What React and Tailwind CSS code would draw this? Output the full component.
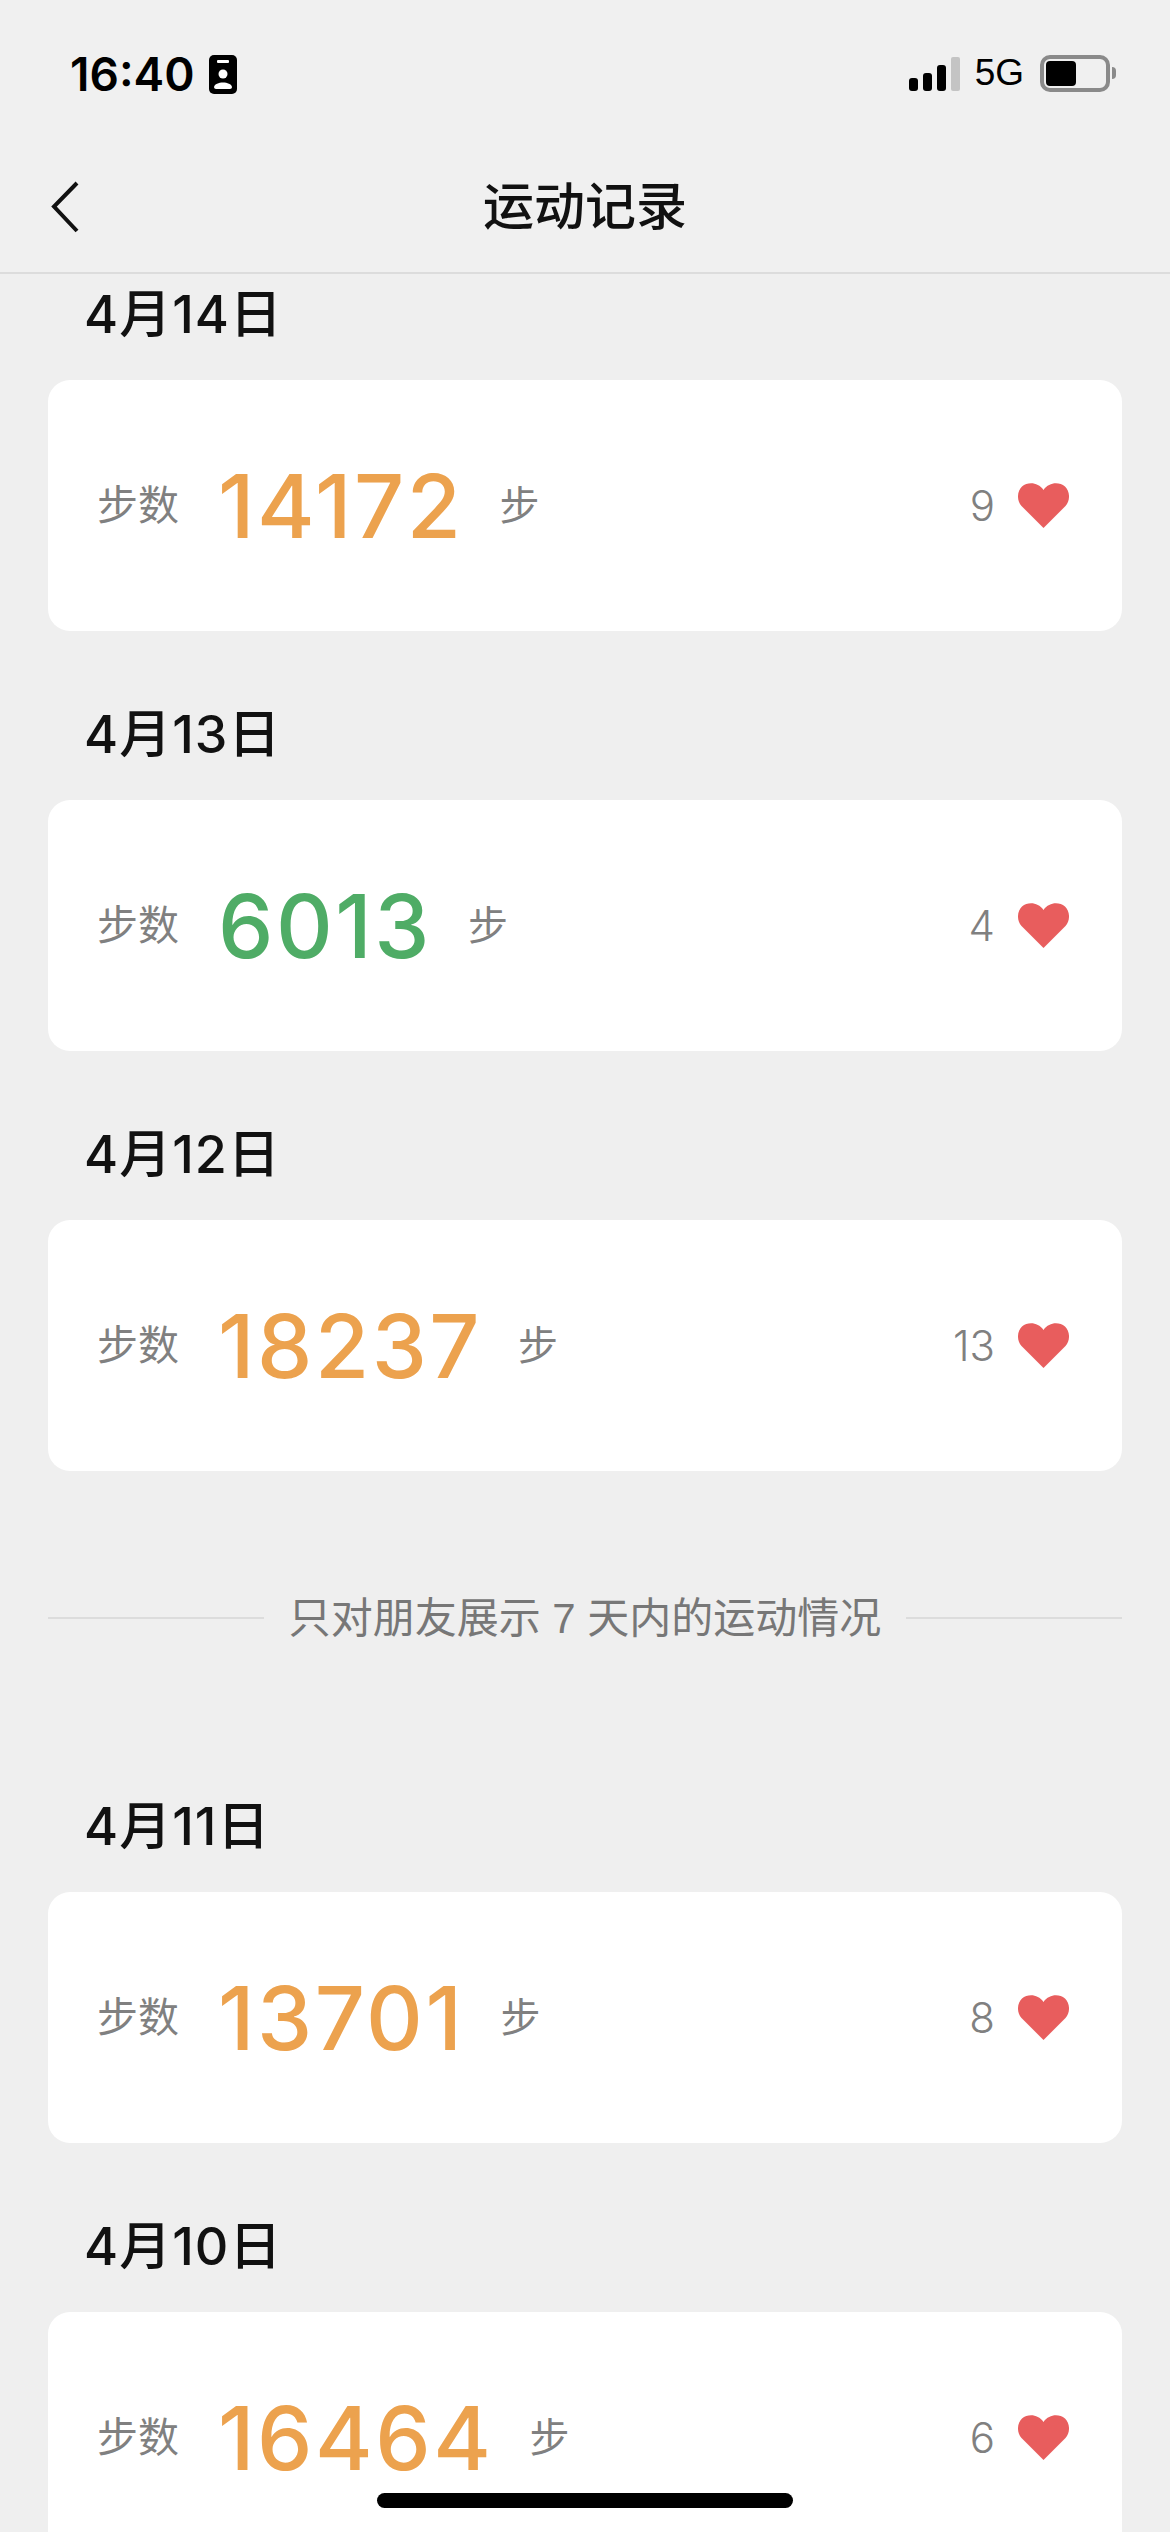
import React from "react";

const days = [
  { date: "4月14日", steps: "14172", likes: 9, color: "text-[#eca24e]" },
  { date: "4月13日", steps: "6013", likes: 4, color: "text-[#4fac66]" },
  { date: "4月12日", steps: "18237", likes: 13, color: "text-[#eca24e]" },
];

const olderDays = [
  { date: "4月11日", steps: "13701", likes: 8, color: "text-[#eca24e]" },
  { date: "4月10日", steps: "16464", likes: 6, color: "text-[#eca24e]" },
];

const Heart = () => (
  <svg viewBox="0 0 51 45" className="w-[51px] h-[45px] ml-[23px]">
    <path
      d="M25.5 45 L3.5 23 C-1.500 17.500 -1 8 4 3.500 C10 -1.500 20 -1 25.5 7 C31 -1 41 -1.500 47 3.500 C52 8 52.500 17.500 47.500 23 Z"
      fill="#e85d5d"
    />
  </svg>
);

const DayCard = ({ date, steps, likes, color }) => (
  <section className="mb-[72px]">
    <h2 className="h-[64px] mb-[33px] pl-[84px] flex items-center text-[52px] tracking-[1px] font-medium text-[#111111] font-['Inter','Noto_Sans_CJK_SC',sans-serif]">{date}</h2>
    <div className="h-[251px] mx-[48px] bg-white rounded-[22px] pl-[49px] pr-[53px] flex items-center">
      <span className="text-[41px] text-[#808080] translate-y-[1px]">步数</span>
      <span className={`ml-[39px] text-[88px] leading-none tracking-[2.5px] font-medium font-['Inter',sans-serif] ${color}`}>{steps}</span>
      <span className="ml-[36px] text-[40px] text-[#808080]">步</span>
      <span className="ml-auto text-[42px] font-light font-['Inter',sans-serif] text-[#808080]">{likes}</span>
      <Heart />
    </div>
  </section>
);

const App = () => {
  return (
    <div className="relative h-[2532px] overflow-hidden bg-[#efefef] font-['Liberation_Sans','Noto_Sans_CJK_SC',sans-serif]">
      <header className="h-[274px] bg-[#f0f0f0] border-b-2 border-[#dcdcdc]">
        <div className="h-[148px] pt-[55px] pl-[70px] pr-[54px] flex items-start">
          <span className="font-['Inter',sans-serif] text-[46px] leading-[39px] font-semibold text-black">16:40</span>
          <svg viewBox="0 0 28 39" className="w-[28px] h-[39px] ml-[14px]">
            <rect width="28" height="39" rx="5" fill="#000" />
            <rect x="8" y="5" width="12" height="3" rx="1" fill="#fff" />
            <circle cx="14" cy="19" r="4.500" fill="#fff" />
            <path d="M5 32 C6 26 22 26 23 32 C23 33 22 34 21 34 L7 34 C6 34 5 33 5 32 Z" fill="#fff" />
          </svg>
          <div className="ml-auto flex items-end gap-[5px] h-[36px]">
            <div className="w-[9px] h-[13px] rounded-[3px] bg-black" />
            <div className="w-[9px] h-[18px] rounded-[3px] bg-black" />
            <div className="w-[9px] h-[26px] rounded-[3px] bg-black" />
            <div className="w-[9px] h-[34px] rounded-[2px] bg-[#c4c4c4]" />
          </div>
          <span className="ml-[15px] text-[37px] leading-[36px] font-medium text-black">5G</span>
          <div className="ml-[16px] w-[70px] h-[37px] border-[4px] border-[#8a8a8a] rounded-[10px] p-[2px]">
            <div className="w-[30px] h-full bg-black rounded-[4px]" />
          </div>
          <div className="mt-[12px] ml-[2px] w-[4px] h-[12px] bg-[#8a8a8a] rounded-r-full" />
        </div>
        <div className="relative h-[124px] flex items-center justify-center">
          <svg viewBox="0 0 30 52" className="absolute left-[50px] top-[33px] w-[30px] h-[52px]" fill="none" stroke="#111" strokeWidth="4">
            <path d="M27 2 L4 25.500 L27 50" />
          </svg>
          <h1 className="text-[51px] font-medium text-[#111111] -mt-[3px]">运动记录</h1>
        </div>
      </header>

      <main className="pt-[9px]">
        {days.map((d) => (
          <DayCard key={d.date} {...d} />
        ))}

        <div className="mt-[122px] mb-[152px] mx-[48px] h-[50px] flex items-center">
          <div className="w-[216px] h-[2px] bg-[#dcdcdc]" />
          <span className="mx-auto text-[42px] text-[#777777] whitespace-nowrap">只对朋友展示 7 天内的运动情况</span>
          <div className="w-[216px] h-[2px] bg-[#dcdcdc]" />
        </div>

        {olderDays.map((d) => (
          <DayCard key={d.date} {...d} />
        ))}
      </main>

      <div className="absolute left-[377px] top-[2493px] w-[416px] h-[15px] rounded-full bg-black" />
    </div>
  );
};

export default App;
